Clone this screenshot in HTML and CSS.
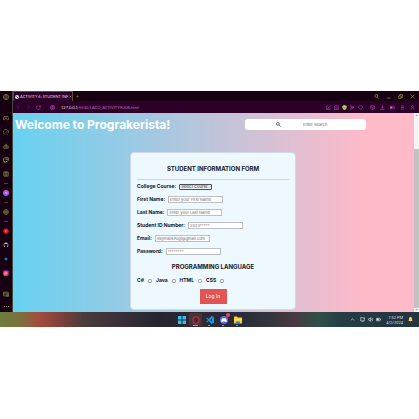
FILE: index.html
```html
<!DOCTYPE html>
<html lang="en">
<head>
<meta charset="utf-8">
<meta name="viewport" content="width=device-width, initial-scale=1">
<title>Activity 6: Student Information Form</title>
<link rel="stylesheet" href="styles.css">
</head>
<body>
<div class="desktop">
  <div class="browser">
    <nav class="sidebar" aria-label="Sidebar">
      <span class="slot home"><svg viewBox="0 0 16 16"><ellipse cx="8" cy="8" rx="7" ry="7"/><ellipse cx="8" cy="8" rx="3" ry="5.5"/></svg></span>
      <span class="slot"><svg viewBox="0 0 16 16"><path d="M3 4h10l2 8-3 1-2-3H6l-2 3-3-1zM5 7h2M10 7h1"/></svg></span>
      <span class="slot"><svg viewBox="0 0 16 16"><path d="M4 14A7 7 0 1 1 14 11M7 10l4-4M9 14h4"/></svg></span>
      <span class="slot"><svg viewBox="0 0 16 16"><path d="M2 8h12v6H2zM5 8V6h6v2M8 6V2M4 11h8"/></svg></span>
      <span class="slot"><svg class="bright" viewBox="0 0 16 16"><path d="M4 2h10v7l-3 3H8l-3 3v-3H2V4zM8 5v3M11 5v3"/></svg></span>
      <span class="slot"><svg viewBox="0 0 16 16"><rect x="2" y="2" width="12" height="12" rx="1"/><circle cx="8" cy="8" r="3"/><path d="M4 4h8M4 12h8"/></svg></span>
      <span class="sep"></span>
      <span class="slot"><svg class="logo" viewBox="0 0 16 16"><defs><linearGradient id="chat" x1="0" y1="1" x2="1" y2="0"><stop offset="0" stop-color="#158cff"/><stop offset=".5" stop-color="#a94dff"/><stop offset="1" stop-color="#ff5a74"/></linearGradient></defs><circle cx="8" cy="8" r="8" fill="url(#chat)"/><path d="M4 9l3-3 2 2 3-2-3 4-2-2z" fill="#fff"/></svg></span>
      <span class="sep"></span>
      <span class="slot"><svg viewBox="0 0 16 16"><circle cx="8" cy="8" r="6.5"/><path d="M2 6h12M2 10h12M8 2v12"/></svg></span>
      <span class="sep"></span>
      <span class="slot"><svg class="logo" viewBox="0 0 16 16"><circle cx="8" cy="8" r="7" fill="#f0111d"/><path d="M6 5l5 3-5 3z" fill="#ff8a8a"/></svg></span>
      <span class="slot"><svg class="logo" viewBox="0 0 16 16"><path d="M8 1a7 7 0 0 0-3 13v-3C3 9 3 6 4 4l2 1h4l2-1c1 2 1 5-1 7v3A7 7 0 0 0 8 1z" fill="#c9c9ce"/></svg></span>
      <span class="slot"><svg class="logo" viewBox="0 0 16 16"><path d="M8 3l2 3 3 2-3 2-2 3-2-3-3-2 3-2z" fill="#168bc4"/></svg></span>
      <span class="slot"><svg class="logo" viewBox="0 0 16 16"><defs><linearGradient id="photo" x1="0" y1="1" x2="1" y2="0"><stop offset="0" stop-color="#ffa52f"/><stop offset=".5" stop-color="#f51d79"/><stop offset="1" stop-color="#9b2be8"/></linearGradient></defs><rect x="1" y="1" width="14" height="14" rx="3" fill="url(#photo)"/><circle cx="8" cy="8" r="3" fill="none" stroke="#fdc" stroke-width="1.5"/></svg></span>
      <span class="slot card-icon"><svg viewBox="0 0 16 16"><path d="M1 3h13v10H1zM1 6h13M9 10h6v4H9zM3 10h3"/></svg></span>
      <span class="dots"></span>
    </nav>
    <div class="window">
      <header class="tabs">
        <div class="tab">
          <svg class="globe" viewBox="0 0 16 16"><circle cx="8" cy="8" r="8" fill="#eee"/><path d="M3 4l4 1-1 4-3-1zM9 8l4-1-1 5-3 1zM8 1l3 1-1 2z" fill="#39213f"/></svg>
          <span class="tab-name">ACTIVITY 6: STUDENT INF</span>
          <svg class="tiny" viewBox="0 0 16 16"><path d="M3 3l10 10M13 3L3 13"/></svg>
        </div>
        <svg class="tiny plus" viewBox="0 0 16 16"><path d="M8 1v14M1 8h14"/></svg>
        <div class="window-tools">
          <svg viewBox="0 0 16 16"><circle cx="7" cy="6" r="4.5"/><path d="M10 10l5 5"/></svg>
          <svg viewBox="0 0 16 16"><path d="M2 13h12"/></svg>
          <svg viewBox="0 0 16 16"><path d="M2 6h8v8H2zM5 6V2h9v9h-4"/></svg>
          <svg viewBox="0 0 16 16"><path d="M2 2l12 12M14 2L2 14"/></svg>
        </div>
      </header>
      <div class="address">
        <div class="nav-tools">
          <svg class="dim" viewBox="0 0 16 16"><path d="M10 2L5 8l5 6"/></svg>
          <svg class="dim" viewBox="0 0 16 16"><path d="M6 2l5 6-5 6"/></svg>
          <svg viewBox="0 0 16 16"><path d="M13 4a6.5 6.5 0 1 0 1 6M14 1v5H9"/></svg>
        </div>
        <svg class="site" viewBox="0 0 16 16"><circle cx="8" cy="8" r="7"/><path d="M2 6h12M2 10h12M8 2v12"/></svg>
        <span class="url"><b>127.0.0.1</b>:5500/LACO_ACTIVITY%206.html</span>
        <div class="page-tools">
          <svg viewBox="0 0 16 16"><path d="M8 3H2v11h11V8M6 10l8-8M4 11h6"/></svg>
          <svg viewBox="0 0 16 16"><path d="M1 4h3l1-2h6l1 2h3v10H1z"/><circle cx="8" cy="9" r="3"/></svg>
          <svg viewBox="0 0 16 16"><path class="shield" d="M8 0l7 3v5c0 4-4 7-7 8-3-1-7-4-7-8V3z"/><path class="tick" d="M5 8l2 2 4-4"/></svg>
          <svg viewBox="0 0 16 16"><path d="M2 2l12 6-12 6 2-6zM4 8h9"/></svg>
          <svg viewBox="0 0 16 16"><path d="M8 14L2 8C0 4 5 0 8 4c3-4 8 0 6 4z"/></svg>
        </div>
        <div class="app-tools">
          <svg viewBox="0 0 16 16"><path d="M8 1l6 3v7l-6 4-6-4V4zM2 4l6 4 6-4M8 8v7"/></svg>
          <svg viewBox="0 0 16 16"><path d="M8 1v9M4 7l4 4 4-4M1 14h14"/></svg>
          <svg viewBox="0 0 16 16"><path d="M0 4h13v8H0zM15 6v4"/><path d="M2 6h5v4H2z" fill="#fff"/></svg>
          <svg viewBox="0 0 16 16"><path d="M3 3h10M3 8h10M3 13h10"/></svg>
          <svg viewBox="0 0 16 16"><circle cx="8" cy="5" r="3"/><path d="M3 15c0-8 10-8 10 0"/></svg>
        </div>
      </div>
      <div class="viewport">
        <main class="page">
          <div class="top">
            <h1>Welcome to Prograkerista!</h1>
            <label class="search">
              <svg viewBox="0 0 16 16"><circle cx="6" cy="6" r="4.5"/><path d="M10 10l5 5"/></svg>
              <input type="search" placeholder="Enter Search" aria-label="Search">
            </label>
          </div>
          <form class="card">
            <h2>STUDENT INFORMATION FORM</h2>
            <hr>
            <div class="row"><label for="course">College Course:</label>
              <span class="picker"><select id="course"><option>Select Course</option></select><svg viewBox="0 0 16 16"><path d="M3 5l5 6 5-6"/></svg></span></div>
            <div class="row"><label for="first">First Name:</label><input id="first" type="text" placeholder="Enter your First Name"></div>
            <div class="row"><label for="last">Last Name:</label><input id="last" type="text" placeholder="Enter your Last Name"></div>
            <div class="row"><label for="number">Student ID Number:</label><input id="number" type="text" placeholder="2023*****"></div>
            <div class="row"><label for="email">Email:</label><input id="email" type="email" placeholder="ReymarkPogi@gmail.com"></div>
            <div class="row"><label for="password">Password:</label><input id="password" type="password" placeholder="********"></div>
            <h2 class="languages">PROGRAMMING LANGUAGE</h2>
            <div class="checks">
              <label>C# <input type="checkbox"></label>
              <label>Java <input type="checkbox"></label>
              <label>HTML <input type="checkbox"></label>
              <label>CSS <input type="checkbox"></label>
            </div>
            <button class="login" type="button">Log In</button>
          </form>
        </main>
        <div class="scrollbar"><span class="arrow">▲</span><span class="thumb"></span><span class="arrow">▼</span></div>
      </div>
    </div>
  </div>
  <footer class="taskbar">
    <div class="apps">
      <span class="app"><svg viewBox="0 0 16 16"><path d="M0 0h7v7H0zM9 0h7v7H9zM0 9h7v7H0zM9 9h7v7H9z" fill="#38bdf3"/></svg></span>
      <span class="app active"><svg viewBox="0 0 16 16"><ellipse cx="8" cy="8" rx="6" ry="6.5" fill="none" stroke="#a52c3a" stroke-width="3"/><ellipse cx="8" cy="8" rx="2.5" ry="5" fill="#46252e"/></svg></span>
      <span class="app open"><svg viewBox="0 0 16 16"><path d="M11 0l5 2v12l-5 2-6-6-3 3-2-1 4-4-4-4 2-1 3 3zM12 5L8 8l4 3z" fill="#1694df" fill-rule="evenodd"/></svg></span>
      <span class="app open"><svg viewBox="0 0 16 16"><circle cx="8" cy="8" r="8" fill="#5969e8"/><path d="M4 5c3-1 5-1 8 0l2 6-3 1-1-1H6l-1 1-3-1z" fill="#fff"/></svg><i class="badge"></i></span>
      <span class="app open"><svg viewBox="0 0 16 16"><path d="M0 1h6l2 2h8v12H0z" fill="#ffc928"/><path d="M0 6h16v3H0z" fill="#ffe477"/><path d="M4 11h8v4H4z" fill="#2387d9"/></svg></span>
    </div>
    <div class="tray">
      <svg viewBox="0 0 16 16"><path d="M3 11l5-6 5 6"/></svg>
      <div class="status">
        <svg viewBox="0 0 16 16"><path d="M10 2H2v10h12V7M5 15h7M12 1v5h3V1"/></svg>
        <svg viewBox="0 0 16 16"><path d="M1 6h3l4-4v12L4 10H1zM10 5c2 2 2 4 0 6M12 2c4 4 4 8 0 12"/></svg>
        <svg viewBox="0 0 16 16"><path d="M1 4h12v8H1zM15 6v4"/><path d="M3 6h5v4H3z" fill="#fff"/></svg>
      </div>
      <div class="clock"><span>7:52 PM</span><span>4/2/2024</span></div>
      <svg viewBox="0 0 16 16"><path class="bell" d="M8 0c4 0 5 3 5 6v4l2 3H1l2-3V6c0-3 1-6 5-6zM6 14h4l-2 2z"/></svg>
    </div>
  </footer>
</div>
</body>
</html>
```
FILE: styles.css
```css
* { box-sizing: border-box; }
body {
  margin: 0;
  padding: 91px 0;
  background: #fff;
  font-family: Inter, "Open Sans", sans-serif;
  font-size: 5px;
  line-height: 7px;
}
svg {
  display: block;
  flex: none;
  width: 5px;
  height: 5px;
  fill: none;
  stroke: currentColor;
  stroke-width: 2;
}
input, select, button { font: inherit; margin: 0; }
.browser { display: flex; background: #160012; }

/* Browser sidebar */
.sidebar {
  flex: none;
  width: 13px;
  display: flex;
  flex-direction: column;
  align-items: center;
  color: #7c8238;
  border-right: 1px solid #45483a;
}
.slot { display: grid; place-items: center; height: 14px; }
.slot svg { width: 6px; height: 6px; stroke-width: 2; }
.slot .logo { stroke: none; }
.slot .bright { color: #a5bb4c; }
.home { height: 12px; margin-bottom: 8px; }
.sep { height: 5px; display: grid; place-items: center; }
.sep::before { content: ""; width: 4px; height: 1px; background: #48452b; }
.card-icon { margin-top: 7px; }
.dots { width: 5px; margin-top: 5px; border-top: 1px dotted #8a8c4c; }

/* Tabs and address bar */
.window { flex: 1; min-width: 0; }
.tabs { display: flex; align-items: center; height: 10px; color: #a5a64b; }
.tab {
  display: flex;
  align-items: center;
  gap: 1px;
  width: 60px;
  height: 10px;
  padding: 0 2px 0 1px;
  color: #e8cfe8;
  background: #2c0029;
  border: 1px solid #57532d;
  border-bottom: 0;
  font-family: Lato, sans-serif;
  font-size: 4px;
}
.tab .globe { width: 4px; height: 4px; stroke: none; }
.tab-name { flex: 1; white-space: nowrap; }
.tab .tiny, .plus { width: 3px; height: 3px; }
.plus { margin-left: 3px; }
.window-tools { display: flex; gap: 7px; margin-left: auto; padding-right: 4px; }
.address {
  display: flex;
  align-items: center;
  height: 12px;
  padding: 0 4px 0 3px;
  color: #a843a8;
  background: #2c0029;
}
.address svg { stroke-width: 2; }
.nav-tools { display: flex; gap: 5px; }
.nav-tools .dim { color: #63235f; }
.site { margin: 0 6px 0 9px; }
.url { flex: 1; font-family: Lato, sans-serif; font-size: 4px; color: #c069c1; white-space: nowrap; }
.url b { font-weight: 400; color: #f0d8f0; }
.page-tools { display: flex; gap: 3px; margin-right: 7px; }
.page-tools .shield { fill: #b9d957; stroke: none; }
.page-tools .tick { stroke: #436000; }
.app-tools { display: flex; gap: 5px; }

/* Web page */
.viewport { display: flex; }
.page {
  flex: 1;
  min-width: 0;
  padding: 6px 0 2px;
  color: #15171b;
  background: linear-gradient(to right, #67d2f1, #ffbac9 88%);
}
.top { display: flex; align-items: center; padding: 0 48px 0 2px; }
h1 { flex: 1; margin: 0; color: #fff; font-size: 12px; line-height: 10px; font-weight: 700; white-space: nowrap; }
.search {
  display: flex;
  align-items: center;
  width: 121px;
  height: 11px;
  background: #fff;
  border-radius: 3px;
}
.search svg { margin: 0 20px 0 31px; }
.search input {
  flex: 1;
  min-width: 0;
  padding: 0 2px;
  border: 0;
  background: none;
  font-size: 4px;
}
::placeholder { color: #6f6f76; opacity: 1; }
.card {
  display: flex;
  flex-direction: column;
  width: 166px;
  margin: 22px auto 0 117px;
  padding: 12px 6px 5px;
  background: #edf8ff;
  border: 1px solid #cfd9e8;
  border-radius: 4px;
}
h2 { margin: 0; font-size: 6px; line-height: 7px; font-weight: 700; text-align: center; }
hr { width: 100%; height: 1px; margin: 7px 0 0; border: 0; background: #cfd4de; }
.row { display: flex; align-items: center; gap: 3px; height: 13px; font-weight: 700; }
.row input {
  width: 55px;
  height: 7px;
  padding: 0 1px;
  border: 1px solid #bcbfc4;
  background: #fff;
  font-size: 4px;
  line-height: 5px;
  font-weight: 400;
}
.picker { display: flex; align-items: center; width: 33px; height: 6px; border: 1px solid #4b4e53; border-radius: 1px; background: #edf0f2; }
.picker select { flex: 1; min-width: 0; height: 4px; padding: 0 0 0 1px; appearance: none; border: 0; background: none; font-size: 4px; font-weight: 400; line-height: 4px; color: #333; }
.picker svg { width: 2px; height: 2px; margin-right: 1px; }
.languages { margin-top: 5px; }
.checks { display: flex; gap: 4px; height: 7px; margin: 7px 0 5px; font-weight: 700; }
.checks label { display: flex; align-items: center; gap: 4px; }
.checks input { width: 4px; height: 4px; appearance: none; background: #fff; border: 1px solid #a9abb0; border-radius: 1px; }
.login { align-self: center; width: 27px; height: 15px; padding: 0; border: 0; color: #fff; background: #e15555; font-size: 5px; }
.scrollbar { display: flex; flex-direction: column; width: 5px; background: #f5f5f5; color: #777; }
.arrow { height: 4px; font-size: 2px; line-height: 4px; text-align: center; }
.thumb { flex: 1; margin-top: 32px; background: #c1c1c1; }

/* Taskbar */
.taskbar {
  display: grid;
  grid-template-columns: 1fr auto 1fr;
  align-items: center;
  height: 15px;
  color: #d5dde2;
  background: linear-gradient(to right, #6a7d3f 0, #7e6f3c 5%, #a34e3c 9%, #84403c 14%, #493c39 20%, #3c313a 28%, #242530 38%, #2d2830 47%, #262a38 56%, #33363d 65%, #4a3840 70%, #2d5048 76%, #243c45 82%, #223440 100%);
}
.apps { grid-column: 2; display: flex; gap: 1px; }
.app { position: relative; display: grid; place-items: center; width: 13px; height: 13px; }
.app svg { width: 8px; height: 8px; stroke: none; }
.active { background: #493238; border-radius: 2px; }
.active::after, .open::after { content: ""; position: absolute; bottom: 0; left: 5px; width: 2px; height: 1px; background: #999; }
.active::after { left: 4px; width: 5px; background: #d2a927; }
.badge { position: absolute; top: 0; right: 0; width: 4px; height: 4px; border-radius: 2px; background: #f0474f; }
.tray { display: flex; align-items: center; justify-content: flex-end; gap: 5px; padding-right: 6px; }
.tray svg { stroke-width: 2; }
.status { display: flex; gap: 3px; }
.clock { display: flex; flex-direction: column; align-items: flex-end; font-family: Roboto, sans-serif; font-size: 4px; line-height: 5px; }
.tray .bell { fill: #ffd044; stroke: none; }
```
